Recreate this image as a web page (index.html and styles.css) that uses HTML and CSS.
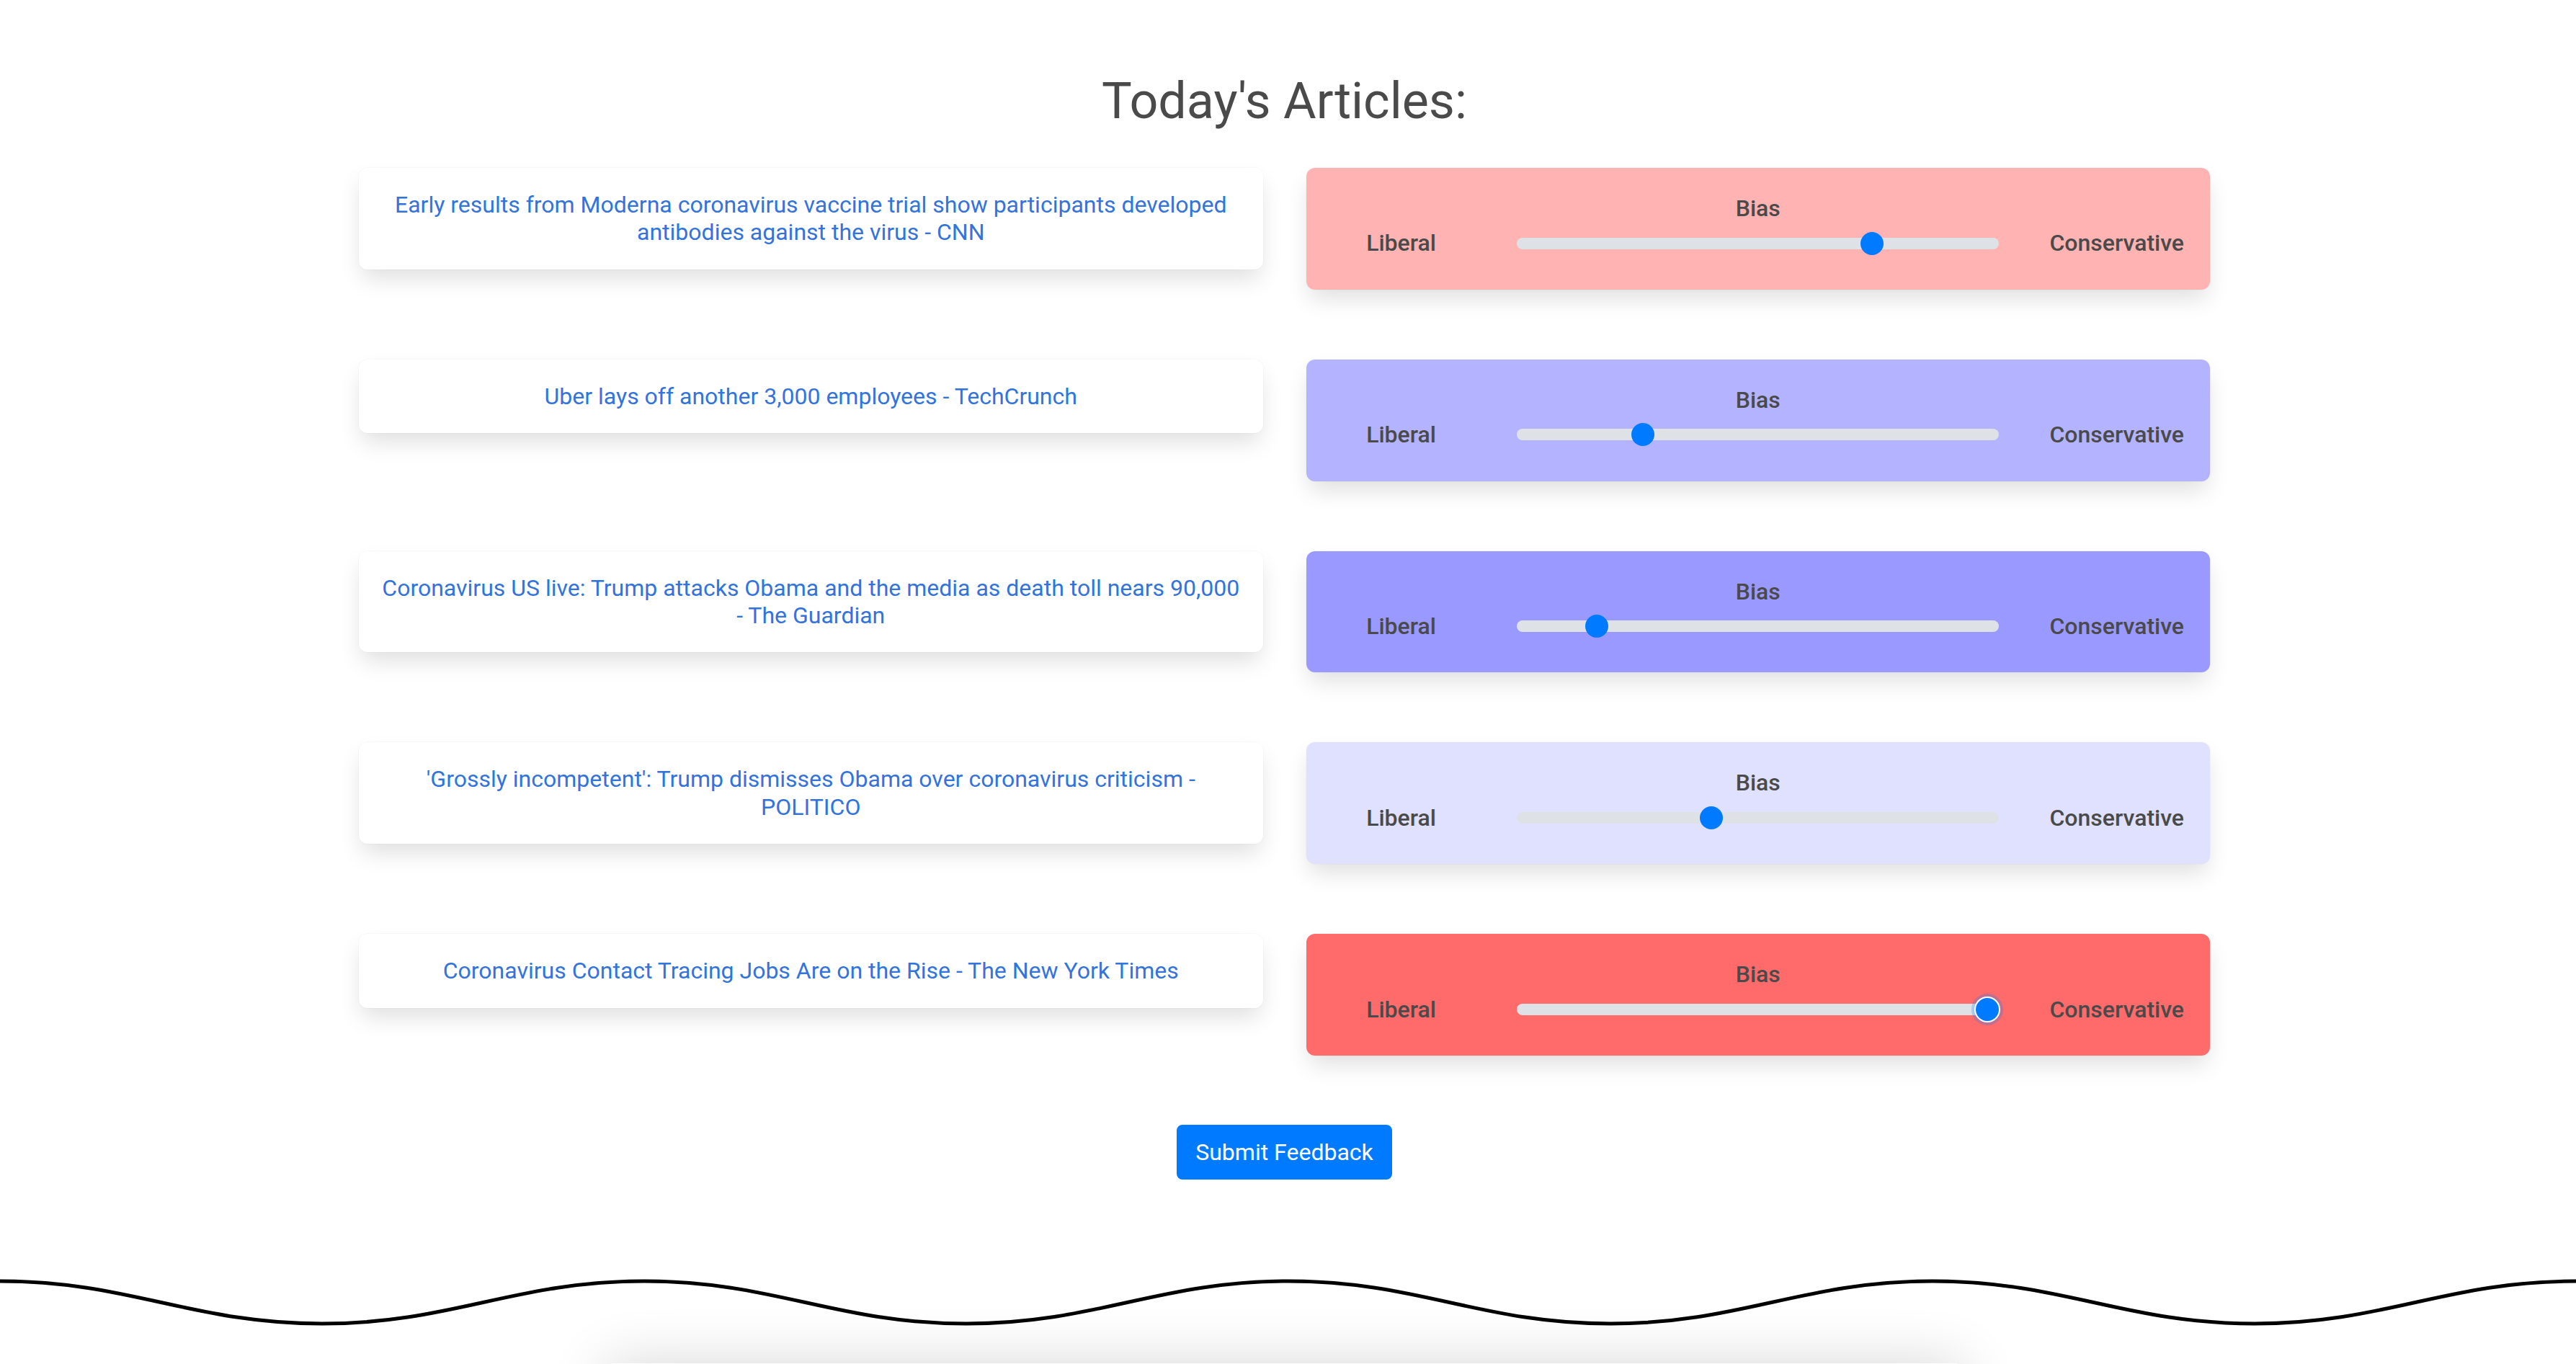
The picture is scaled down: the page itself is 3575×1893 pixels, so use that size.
FILE: index.html
```html
<!DOCTYPE html>
<html lang="en">
<head>
<meta charset="utf-8">
<title>Today's Articles</title>
<link rel="stylesheet" href="styles.css">
</head>
<body>
<div class="page">
  <div class="shell">
    <main class="content">
      <h1 class="page-title">Today's Articles:</h1>
      <div class="rows">
        <div class="row">
          <div class="article"><a href="#">Early results from Moderna coronavirus vaccine trial show participants developed antibodies against the virus - CNN</a></div>
          <div class="bias bias--r75">
            <div class="bias-title">Bias</div>
            <div class="bias-row">
              <span class="bias-label">Liberal</span>
              <input class="range" type="range" min="0" max="100" value="75">
              <span class="bias-label bias-label--right">Conservative</span>
            </div>
          </div>
        </div>
        <div class="row">
          <div class="article"><a href="#">Uber lays off another 3,000 employees - TechCrunch</a></div>
          <div class="bias bias--b25">
            <div class="bias-title">Bias</div>
            <div class="bias-row">
              <span class="bias-label">Liberal</span>
              <input class="range" type="range" min="0" max="100" value="25">
              <span class="bias-label bias-label--right">Conservative</span>
            </div>
          </div>
        </div>
        <div class="row">
          <div class="article"><a href="#">Coronavirus US live: Trump attacks Obama and the media as death toll nears 90,000 - The Guardian</a></div>
          <div class="bias bias--b15">
            <div class="bias-title">Bias</div>
            <div class="bias-row">
              <span class="bias-label">Liberal</span>
              <input class="range" type="range" min="0" max="100" value="15">
              <span class="bias-label bias-label--right">Conservative</span>
            </div>
          </div>
        </div>
        <div class="row">
          <div class="article"><a href="#">'Grossly incompetent': Trump dismisses Obama over coronavirus criticism - POLITICO</a></div>
          <div class="bias bias--b40">
            <div class="bias-title">Bias</div>
            <div class="bias-row">
              <span class="bias-label">Liberal</span>
              <input class="range" type="range" min="0" max="100" value="40">
              <span class="bias-label bias-label--right">Conservative</span>
            </div>
          </div>
        </div>
        <div class="row">
          <div class="article"><a href="#">Coronavirus Contact Tracing Jobs Are on the Rise - The New York Times</a></div>
          <div class="bias bias--r100">
            <div class="bias-title">Bias</div>
            <div class="bias-row">
              <span class="bias-label">Liberal</span>
              <input class="range range--focus" type="range" min="0" max="100" value="100">
              <span class="bias-label bias-label--right">Conservative</span>
            </div>
          </div>
        </div>
      </div>
      <div class="actions">
        <button class="btn-submit" type="button">Submit Feedback</button>
      </div>
    </main>
  </div>
  <svg class="wave" viewBox="0 0 3575 84" preserveAspectRatio="none" aria-hidden="true">
    <path d="M0,12 C180,12 267,71 447,71 S714,12 894,12 S1161,71 1341,71 S1608,12 1788,12 S2055,71 2235,71 S2502,12 2682,12 S2949,71 3129,71 S3395,12 3575,12" fill="none" stroke="#000" stroke-width="5"/>
  </svg>
  <div class="shell">
    <div class="next-card"></div>
  </div>
</div>
</body>
</html>
```

FILE: styles.css
```css
html, body {
  margin: 0;
  padding: 0;
  background: #fff;
}

body {
  font-family: Roboto, "Noto Sans", "Liberation Sans", sans-serif;
  color: #4a4a4a;
}

.page {
  height: 1893px;
  overflow: hidden;
}

.shell {
  padding-right: 10px;
}

.content {
  width: 2569px;
  margin: 0 auto;
}

.page-title {
  margin: 0;
  padding-top: 98px;
  font-family: Roboto, "Noto Sans", sans-serif;
  font-weight: 400;
  font-size: 70px;
  line-height: 84px;
  text-align: center;
  color: #4a4a4a;
}

.rows {
  margin-top: 51px;
  display: flex;
  flex-direction: column;
  gap: 97px;
}

.row {
  display: grid;
  grid-template-columns: 1fr 1fr;
  column-gap: 60px;
  align-items: start;
}

.article {
  background: #fff;
  border-radius: 12px;
  padding: 32px 24px;
  text-align: center;
  font-size: 32px;
  line-height: 1.2;
  box-shadow: 0 16px 32px -4px rgba(10, 10, 10, 0.13), 0 0 0 1px rgba(10, 10, 10, 0.02);
}

.article a {
  color: #3273dc;
  text-decoration: none;
}

.bias {
  border-radius: 12px;
  padding: 37px 36px 45px 32px;
  box-shadow: 0 16px 32px -4px rgba(10, 10, 10, 0.13), 0 0 0 1px rgba(10, 10, 10, 0.02);
  font-family: Roboto, "Noto Sans", sans-serif;
  font-weight: 500;
  font-size: 32px;
  line-height: 1.2;
  color: #4a4a4a;
}

.bias--r75 { background: #ffb3b3; }
.bias--b25 { background: #b3b3ff; }
.bias--b15 { background: #9999ff; }
.bias--b40 { background: #e0e0ff; }
.bias--r100 { background: #ff6b6b; }

.bias-title {
  text-align: center;
  padding-left: 4px;
}

.bias-row {
  margin-top: 10px;
  display: grid;
  grid-template-columns: 200px 669px 1fr;
  column-gap: 60px;
  align-items: center;
}

.bias-label {
  text-align: center;
}

.bias-label--right {
  text-align: right;
  white-space: nowrap;
}

.range {
  -webkit-appearance: none;
  appearance: none;
  display: block;
  width: 100%;
  height: 32px;
  margin: 0;
  padding: 0;
  background: transparent;
}

.range::-webkit-slider-runnable-track {
  height: 16px;
  background: #dee2e6;
  border-radius: 16px;
  border: 0;
}

.range::-webkit-slider-thumb {
  -webkit-appearance: none;
  appearance: none;
  width: 32px;
  height: 32px;
  margin-top: -8px;
  border: 0;
  border-radius: 50%;
  background: #007bff;
}

.range--focus::-webkit-slider-thumb {
  box-shadow: 0 0 0 2px #fff, 0 0 0 6px rgba(0, 123, 255, 0.25);
}

.actions {
  margin-top: 96px;
  text-align: center;
}

.btn-submit {
  font-family: Roboto, "Noto Sans", sans-serif;
  font-size: 32px;
  line-height: 1.5;
  font-weight: 400;
  color: #fff;
  background: #007bff;
  border: 2px solid #007bff;
  border-radius: 8px;
  padding: 12px 24px;
  margin: 0;
}

.wave {
  display: block;
  width: 100%;
  height: 84px;
  margin-top: 129px;
}

.next-card {
  width: 1885px;
  height: 400px;
  margin: 42px auto 0;
  background: #fff;
  border-radius: 12px;
  box-shadow: 0 0 80px rgba(10, 10, 10, 0.16);
}
```
